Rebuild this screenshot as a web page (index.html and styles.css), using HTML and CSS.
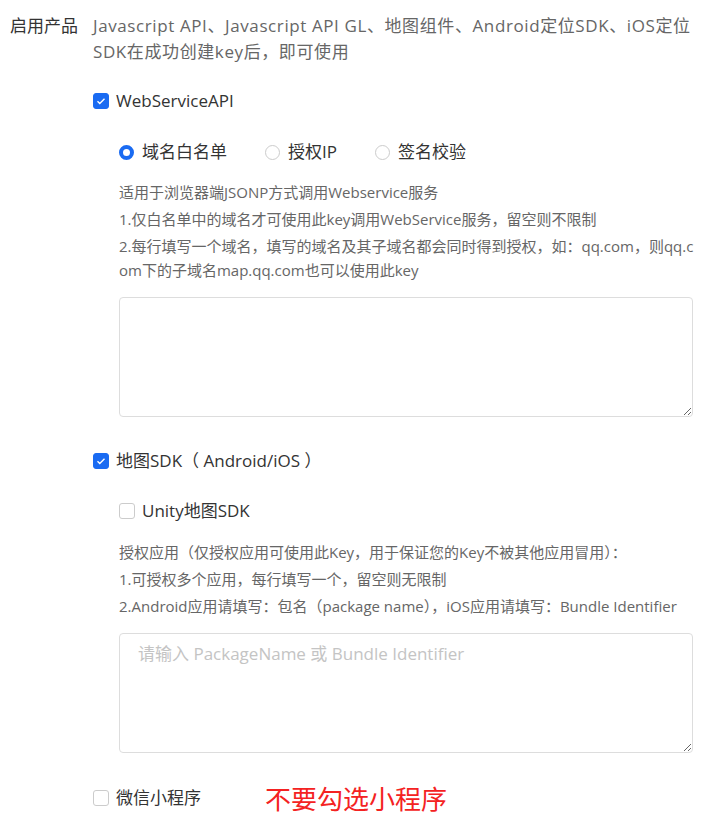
FILE: index.html
```html
<!DOCTYPE html>
<html lang="zh-CN">
<head>
<meta charset="UTF-8" />
<meta name="viewport" content="width=device-width, initial-scale=1" />
<title>启用产品</title>
<link rel="stylesheet" href="styles.css">
</head>
<body>

<div class="form-row">
  <div class="form-label">启用产品</div>
  <div class="form-content">
    <p class="intro">Javascript API、Javascript API GL、地图组件、Android定位SDK、iOS定位SDK在成功创建key后，即可使用</p>

    <label class="check top"><input type="checkbox" checked> WebServiceAPI</label>
    <div class="sub">
      <div class="radios">
        <label class="radio"><input type="radio" name="ws" checked> 域名白名单</label>
        <label class="radio"><input type="radio" name="ws"> 授权IP</label>
        <label class="radio"><input type="radio" name="ws"> 签名校验</label>
      </div>
      <div class="help">
        <p>适用于浏览器端JSONP方式调用Webservice服务</p>
        <p>1.仅白名单中的域名才可使用此key调用WebService服务，留空则不限制</p>
        <p>2.每行填写一个域名，填写的域名及其子域名都会同时得到授权，如：qq.com，则qq.com下的子域名map.qq.com也可以使用此key</p>
      </div>
      <textarea class="box"></textarea>
    </div>

    <label class="check top sdk"><input type="checkbox" checked> 地图SDK（ Android/iOS ）</label>
    <div class="sub">
      <label class="check unity"><input type="checkbox"> Unity地图SDK</label>
      <div class="help">
        <p>授权应用（仅授权应用可使用此Key，用于保证您的Key不被其他应用冒用）：</p>
        <p>1.可授权多个应用，每行填写一个，留空则无限制</p>
        <p>2.Android应用请填写：包名（package name），iOS应用请填写：Bundle Identifier</p>
      </div>
      <textarea class="box" placeholder="请输入 PackageName 或 Bundle Identifier"></textarea>
    </div>

    <div class="last">
      <label class="check"><input type="checkbox"> 微信小程序</label>
      <span class="warn">不要勾选小程序</span>
    </div>
  </div>
</div>

</body>
</html>
```

FILE: styles.css
```css
body {
  margin: 0;
  background: #fff;
  font-family: "Open Sans", "Noto Sans CJK SC", sans-serif;
  color: #333;
}

.form-row {
  display: flex;
  padding: 13px 0 0 10px;
}

.form-label {
  width: 83px;
  flex-shrink: 0;
  font-size: 17px;
  line-height: 26px;
  color: #333;
}

.form-content {
  width: 604px;
}

.intro {
  margin: 0;
  font-size: 17px;
  line-height: 26px;
  letter-spacing: 0.6px;
  color: #666;
}

.check {
  display: flex;
  align-items: center;
  font-size: 17px;
  line-height: 24px;
  color: #333;
}

.check.top {
  margin-top: 24px;
}

.check.sdk {
  margin-top: 32px;
}

.check.unity {
  margin-top: 26px;
}

.check input {
  appearance: none;
  width: 16px;
  height: 16px;
  margin: 0 7px 0 0;
  border: 1px solid #ccc;
  border-radius: 3px;
  background: #fff;
}

.check input:checked {
  border-color: #1a6bf2;
  background: #1a6bf2 url("data:image/svg+xml,%3Csvg xmlns='http://www.w3.org/2000/svg' viewBox='0 0 16 16'%3E%3Cpath d='M4 8.2l2.6 2.6L12 5.4' fill='none' stroke='%23fff' stroke-width='1.6'/%3E%3C/svg%3E") center/14px no-repeat;
}

.sub {
  padding-left: 26px;
  width: 574px;
}

.radios {
  display: flex;
  margin-top: 27px;
}

.radio {
  display: flex;
  align-items: center;
  font-size: 17px;
  line-height: 24px;
  margin-right: 38px;
}

.radio input {
  appearance: none;
  width: 15px;
  height: 15px;
  margin: 0 8px 0 0;
  border: 1px solid #ccc;
  border-radius: 50%;
}

.radio input:checked {
  border: 4px solid #1a6bf2;
}

.help {
  width: 582px;
  margin-top: 16px;
  font-size: 15px;
  line-height: 24px;
  color: #666;
  word-break: break-all;
}

.unity + .help {
  margin-top: 17px;
}

.help p {
  margin: 0 0 3px;
}

.box {
  display: block;
  box-sizing: border-box;
  width: 574px;
  height: 120px;
  margin-top: 15px;
  padding: 8px 18px;
  border: 1px solid #ddd;
  border-radius: 4px;
  font-family: "Open Sans", "Noto Sans CJK SC", sans-serif;
  font-size: 17px;
  line-height: 24px;
  color: #333;
}

.unity ~ .box {
  margin-top: 15px;
}

.box::placeholder {
  color: #c4c4c4;
}

.last {
  display: flex;
  align-items: center;
  height: 36px;
  margin-top: 27px;
}

.last .check {
  width: 172px;
}

.warn {
  font-size: 26px;
  line-height: 36px;
  color: #f42222;
  font-family: "Noto Sans CJK SC", sans-serif;
}
```
